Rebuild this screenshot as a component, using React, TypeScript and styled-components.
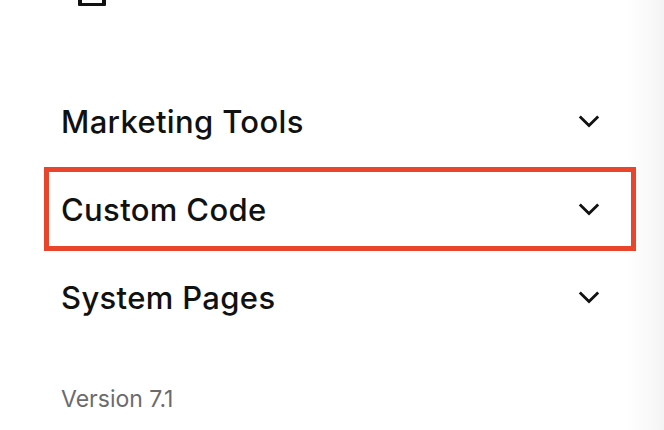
import React from "react";
import styled, { createGlobalStyle } from "styled-components";

const Global = createGlobalStyle`
  html, body {
    margin: 0;
    padding: 0;
    width: 664px;
    height: 430px;
    overflow: hidden;
    background: linear-gradient(to right, #ffffff 0px, #ffffff 626px, #f7f7f7 656px, #f3f3f3 664px);
    font-family: Inter, "Liberation Sans", sans-serif;
    -webkit-font-smoothing: antialiased;
  }
`;

const Panel = styled.nav`
  display: flex;
  flex-direction: column;
  width: 596px;
  padding-left: 42px;
`;

const TopIcon = styled.div`
  width: 28px;
  height: 30px;
  margin-top: -24px;
  margin-left: 36px;
  box-sizing: border-box;
  border: 4px solid #111;
  border-bottom-width: 3.5px;
  border-radius: 1px;
`;

const List = styled.ul`
  list-style: none;
  margin: 71px 0 0;
  padding: 0;
  display: flex;
  flex-direction: column;
`;

const Row = styled.li<{ $active?: boolean }>`
  height: 88px;
  display: flex;
  align-items: center;
  justify-content: space-between;
  padding: 0 38px 0 19px;
  outline: ${(p) => (p.$active ? "5px solid #e8452c" : "none")};
  outline-offset: -7px;
`;

const Label = styled.span`
  font-size: 31px;
  line-height: 1;
  font-weight: 500;
  color: #111111;
  letter-spacing: 0.35px;
`;

const Chevron = styled.svg`
  width: 22px;
  height: 14px;
  display: block;
  flex: none;
`;

const Version = styled.div`
  margin-top: 47px;
  margin-left: 19px;
  font-size: 23px;
  line-height: 1;
  font-weight: 400;
  color: #6b6b6b;
  letter-spacing: 0px;
`;

const ChevronDown = () => (
  <Chevron viewBox="0 0 22 14">
    <polyline
      points="1.8,2.5 11,11.5 20.2,2.5"
      fill="none"
      stroke="#111"
      strokeWidth="2.8"
      strokeLinejoin="miter"
    />
  </Chevron>
);

const items = [
  { label: "Marketing Tools" },
  { label: "Custom Code", active: true },
  { label: "System Pages" },
];

export default function App() {
  return (
    <>
      <Global />
      <Panel>
        <TopIcon />
        <List>
          {items.map((it) => (
            <Row key={it.label} $active={it.active}>
              <Label>{it.label}</Label>
              <ChevronDown />
            </Row>
          ))}
        </List>
        <Version>Version 7.1</Version>
      </Panel>
    </>
  );
}
